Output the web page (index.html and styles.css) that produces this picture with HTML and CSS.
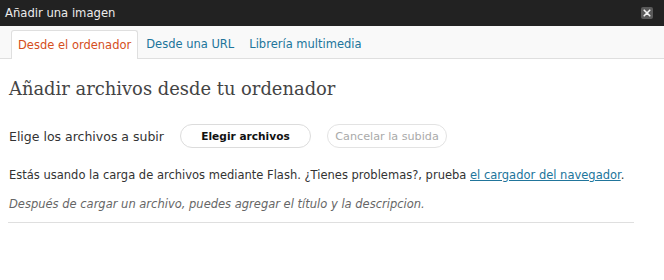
FILE: index.html
```html
<!DOCTYPE html>
<html lang="es">
<head>
<meta charset="utf-8">
<link rel="stylesheet" href="styles.css">
</head>
<body>
<div class="dialog">
  <div class="titlebar">
    <span class="title">Añadir una imagen</span>
    <span class="close" aria-label="Cerrar">
      <svg width="12" height="12" viewBox="0 0 12 12"><path d="M3.2 3.2L8.8 8.8M8.8 3.2L3.2 8.8" stroke="#f2f2f2" stroke-width="1.6" stroke-linecap="round"/></svg>
    </span>
  </div>
  <div class="tabs">
    <a class="tab active">Desde el ordenador</a>
    <a class="tab">Desde una URL</a>
    <a class="tab">Librería multimedia</a>
  </div>
  <div class="content">
    <h3 class="heading">Añadir archivos desde tu ordenador</h3>
    <div class="upload-row">
      <span class="label">Elige los archivos a subir</span>
      <button class="btn primary">Elegir archivos</button>
      <button class="btn disabled">Cancelar la subida</button>
    </div>
    <p class="info">Estás usando la carga de archivos mediante Flash. ¿Tienes problemas?, prueba <a class="link">el cargador del navegador</a>.</p>
    <p class="hint">Después de cargar un archivo, puedes agregar el título y la descripcion.</p>
    <div class="divider"></div>
  </div>
</div>
</body>
</html>
```
FILE: styles.css
```css
html, body { margin: 0; padding: 0; background: #fff; }
body { font-family: "DejaVu Sans", "Liberation Sans", sans-serif; font-size: 11.5px; color: #333; }
.dialog { width: 664px; height: 280px; }
.titlebar { height: 26px; background: #222; display: flex; align-items: center; justify-content: space-between; padding: 0 11px 0 5px; box-sizing: border-box; }
.title { color: #ececec; font-size: 11.6px; }
.close { width: 12px; height: 12px; background: #5a5a5a; border-radius: 2px; display: flex; align-items: center; justify-content: center; }
.tabs { height: 33px; background: #f9f9f9; border-bottom: 1px solid #dfdfdf; display: flex; align-items: flex-end; padding-left: 11px; box-sizing: border-box; }
.tab { font-size: 11.5px; color: #21759b; padding: 0 7px 0 8px; height: 28px; line-height: 28px; box-sizing: border-box; }
.tab.active { color: #d54e21; background: #fff; border: 1px solid #dfdfdf; border-bottom: none; border-radius: 3px 3px 0 0; height: 29px; margin-bottom: -1px; padding: 0 6px; }
.content { padding: 0 8px 0 9px; }
.heading { font-family: "DejaVu Serif", "Liberation Serif", serif; font-weight: normal; font-size: 17.9px; color: #444; margin: 18px 0 0; line-height: 24px; }
.upload-row { display: flex; align-items: center; margin-top: 23px; height: 24px; }
.label { font-size: 12.5px; margin-right: 16px; }
.btn { font-family: inherit; height: 24px; border-radius: 12px; border: 1px solid #dcdcdc; background: #fff; padding: 0; white-space: nowrap; }
.btn.primary { font-weight: bold; font-size: 10.6px; color: #111; width: 131px; margin-right: 16px; }
.btn.disabled { font-size: 11.2px; color: #aaa; width: 120px; border-color: #e3e3e3; }
.info { margin: 18px 0 0; line-height: 18px; }
.link { color: #21759b; text-decoration: underline; }
.hint { margin: 11px 0 0; font-style: italic; color: #666; line-height: 18px; }
.divider { margin-top: 9px; height: 0; border-top: 1px solid #dfdfdf; width: 626px; margin-left: -1px; }
```
